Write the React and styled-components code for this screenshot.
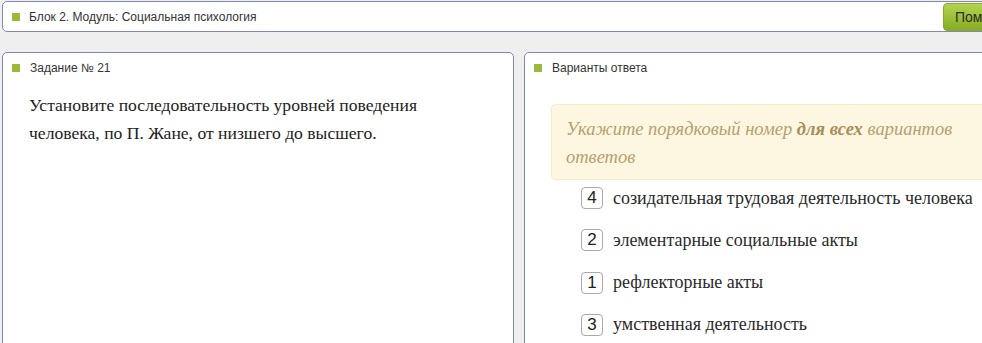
import * as React from 'react';
import styled, { createGlobalStyle } from 'styled-components';

const GlobalStyle = createGlobalStyle`
  html, body {
    margin: 0;
    padding: 0;
    background: #efeff0;
  }
  body {
    font-family: "Liberation Sans", Arial, sans-serif;
  }
`;

// layout

const Page = styled.div`
  width: 982px;
  height: 343px;
  overflow: hidden;
  padding: 1px 0 0 2px;
  box-sizing: border-box;
`;

const Inner = styled.div`
  width: 1120px;
  display: flex;
  flex-direction: column;
  gap: 20px;
`;

const TopBar = styled.div`
  height: 31px;
  box-sizing: border-box;
  background: #fff;
  border: 1px solid #8185b8;
  border-radius: 5px;
  display: flex;
  align-items: center;
  padding: 0 10px 0 9px;
  gap: 9px;
`;

const Marker = styled.span`
  width: 8px;
  height: 8px;
  background: #9cba3a;
  flex: none;
`;

const Caption = styled.span`
  font-size: 12px;
  color: #333;
  flex: 1;
`;

const HelpButton = styled.button`
  height: 28px;
  width: 80px;
  padding: 0 0 0 11px;
  text-align: left;
  margin-right: 88px;
  border: 1px solid #8aaa2c;
  border-radius: 4px;
  background: linear-gradient(#b3d451, #87ab22);
  color: #2d2d2d;
  font-family: "Liberation Sans", Arial, sans-serif;
  font-size: 14px;
`;

const Columns = styled.div`
  display: flex;
  gap: 10px;
  align-items: flex-start;
`;

const Panel = styled.section`
  width: ${(p) => p.$width}px;
  height: 320px;
  box-sizing: border-box;
  background: #fff;
  border: 1px solid #8185b8;
  border-radius: 5px;
`;

const PanelHead = styled.div`
  height: 29px;
  display: flex;
  align-items: center;
  gap: 10px;
  padding-left: 9px;
  font-size: 12px;
  color: #333;
`;

const Question = styled.p`
  margin: 9px 0 0 26px;
  width: 440px;
  font-family: "Liberation Serif", "Times New Roman", serif;
  font-size: 17.6px;
  line-height: 28px;
  color: #222;
`;

const Hint = styled.div`
  margin: 22px 0 0 26px;
  padding: 10px 14px 8px;
  background: #fdf7e2;
  border: 1px solid #f6ecca;
  border-radius: 4px 0 0 4px;
  font-family: "Liberation Serif", "Times New Roman", serif;
  font-style: italic;
  font-size: 18.5px;
  line-height: 28px;
  color: #b79f6e;
  width: 420px;

  b {
    font-weight: bold;
    color: #a98d58;
  }
`;

const AnswerList = styled.ol`
  list-style: none;
  margin: 7px 0 0 56px;
  padding: 0;
  display: flex;
  flex-direction: column;
  gap: 20.3px;
`;

const Answer = styled.li`
  display: flex;
  align-items: center;
  gap: 10px;
  height: 22px;
  font-family: "Liberation Serif", "Times New Roman", serif;
  font-size: 18px;
  white-space: nowrap;
  color: #2a2a2a;
`;

const Order = styled.span`
  width: 22px;
  height: 22px;
  box-sizing: border-box;
  border: 1px solid #a9a9a9;
  border-radius: 4px;
  display: flex;
  align-items: center;
  justify-content: center;
  font-family: "Liberation Sans", Arial, sans-serif;
  font-size: 17px;
  color: #222;
  flex: none;
`;

const answers = [
  { n: 4, text: 'созидательная трудовая деятельность человека' },
  { n: 2, text: 'элементарные социальные акты' },
  { n: 1, text: 'рефлекторные акты' },
  { n: 3, text: 'умственная деятельность' },
];

const App = () => {
  return (
    <>
      <GlobalStyle />
      <Page>
        <Inner>
          <TopBar>
            <Marker />
            <Caption>Блок 2. Модуль: Социальная психология</Caption>
            <HelpButton>Помощь</HelpButton>
          </TopBar>
          <Columns>
            <Panel $width={512}>
              <PanelHead>
                <Marker />
                Задание № 21
              </PanelHead>
              <Question>
                Установите последовательность уровней поведения человека, по П.
                Жане, от низшего до высшего.
              </Question>
            </Panel>
            <Panel $width={560}>
              <PanelHead>
                <Marker />
                Варианты ответа
              </PanelHead>
              <Hint>
                Укажите порядковый номер <b>для всех</b> вариантов ответов
              </Hint>
              <AnswerList>
                {answers.map((a) => (
                  <Answer key={a.n}>
                    <Order>{a.n}</Order>
                    {a.text}
                  </Answer>
                ))}
              </AnswerList>
            </Panel>
          </Columns>
        </Inner>
      </Page>
    </>
  );
};

export default App;
